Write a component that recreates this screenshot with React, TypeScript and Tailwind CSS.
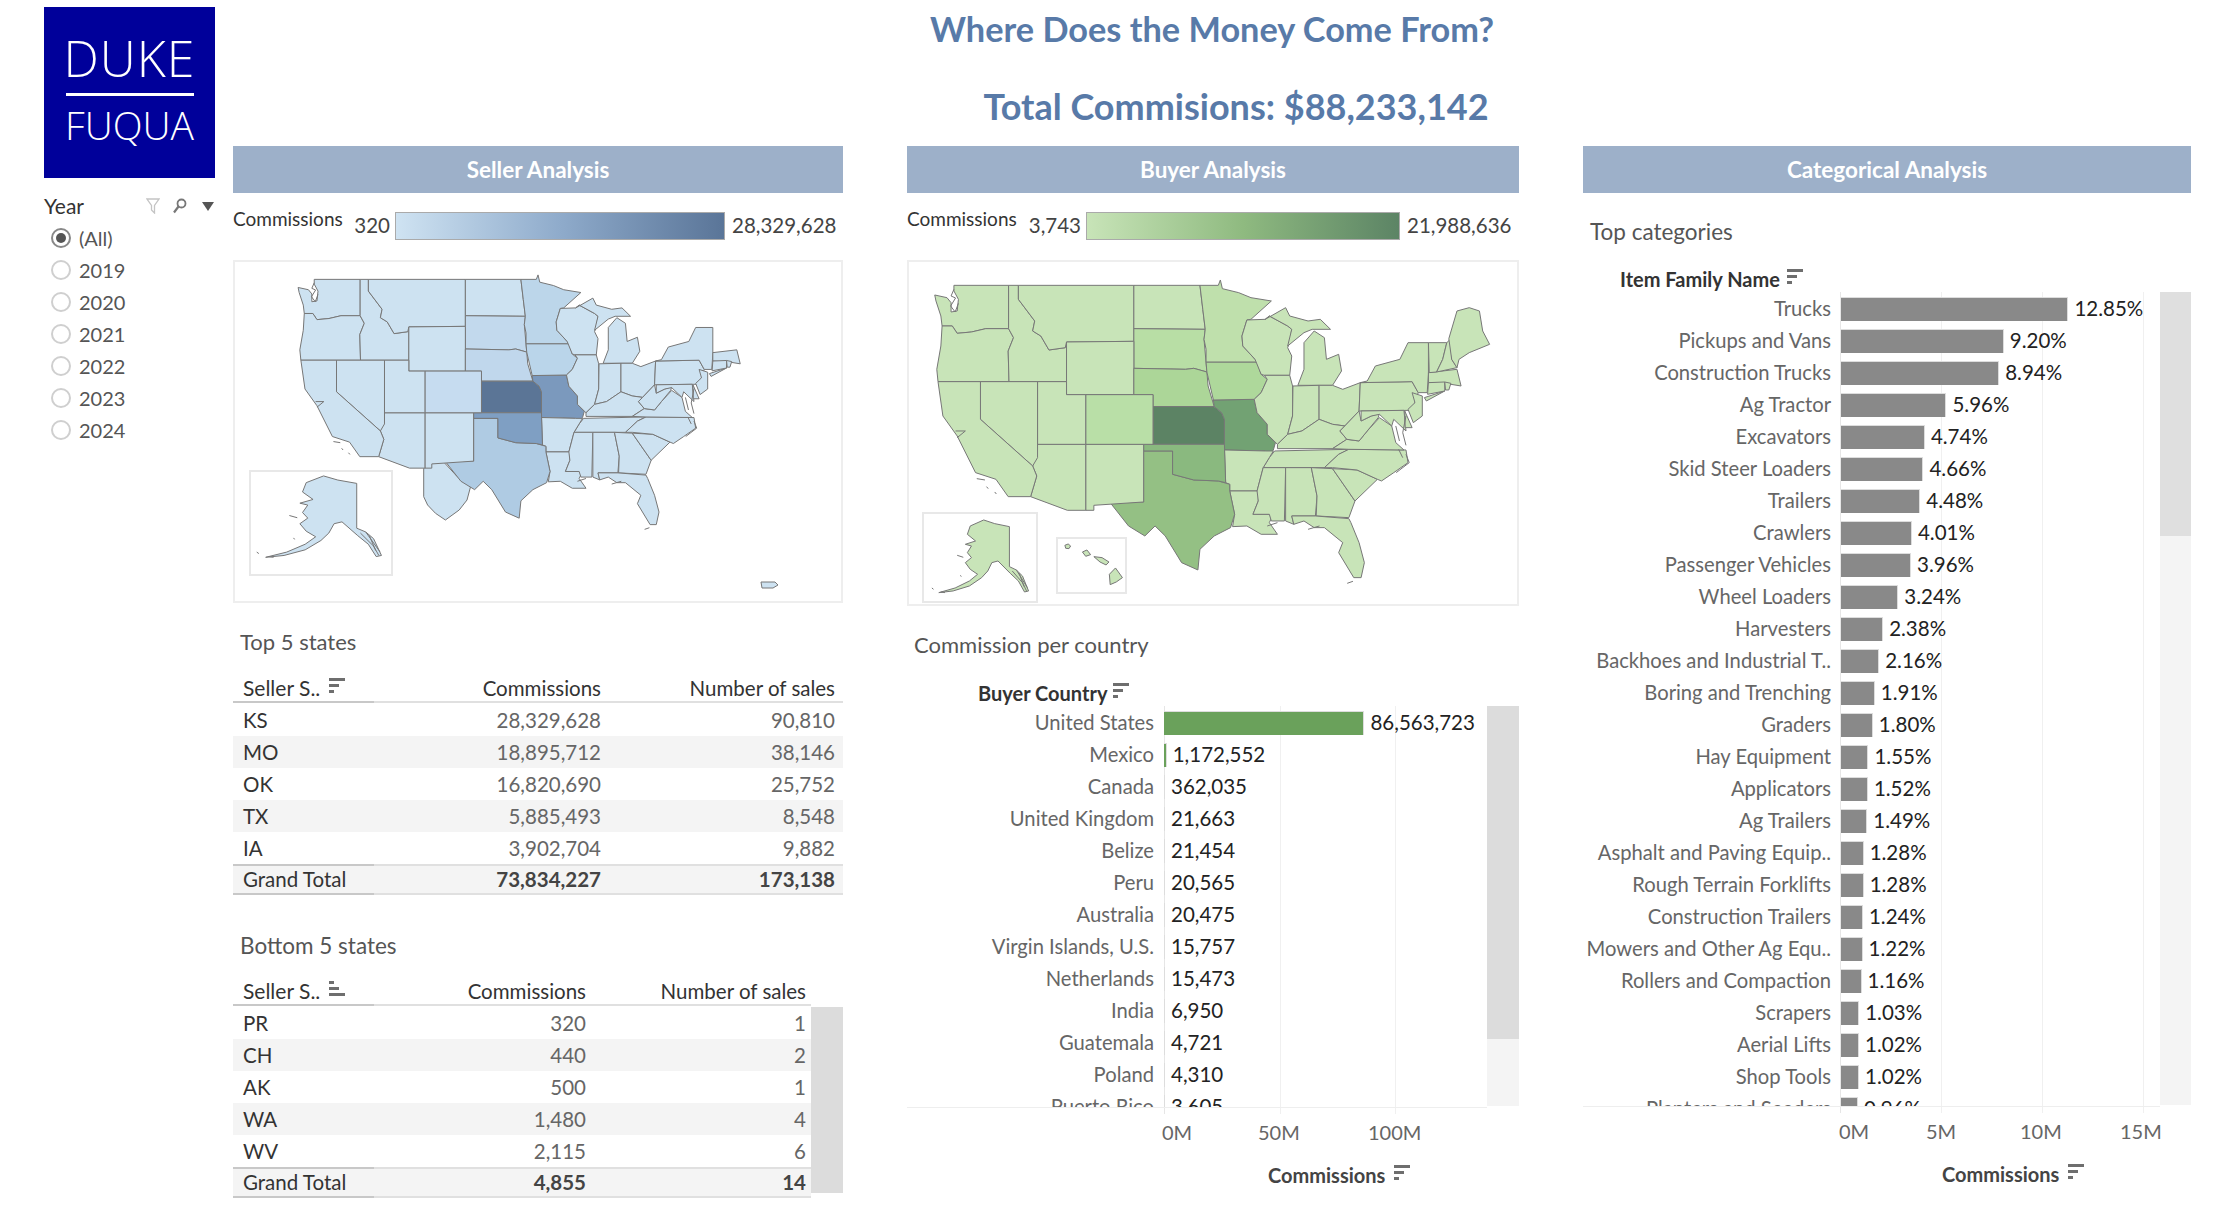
import React from "react";

// polygons are in one shared map space, each dashboard map scales them into its panel
const states: Record<string, string> = {
  WA: "85,497 115,505 125,520 125,548 140,545 143,510 132,485 132,468 266,468 266,598 210,598 175,608 140,612 128,590 103,590 100,560 88,515",
  OR: "103,590 128,590 140,612 175,608 210,598 266,598 278,625 265,665 267,757 93,757 90,720 100,650",
  ID: "266,468 290,468 290,510 330,575 325,605 345,620 365,662 405,655 408,638 408,757 267,757 265,665 278,625 266,598",
  MT: "290,468 573,468 573,636 408,638 405,655 365,662 345,620 325,605 330,575 290,510",
  ND: "573,468 735,468 742,540 748,600 573,598",
  SD: "573,598 748,600 745,630 750,700 752,728 720,717 700,720 573,717",
  WY: "408,638 573,636 573,796 408,796",
  NE: "573,717 700,720 720,717 752,728 755,770 770,832 620,832 620,796 573,796",
  KS: "620,832 770,832 788,850 795,870 795,945 620,945",
  MO: "768,812 868,810 875,850 900,885 900,915 920,940 915,962 902,980 895,965 795,962 795,870 788,850 770,832",
  IA: "750,698 875,698 885,735 900,750 885,790 868,810 768,812 752,728",
  MN: "735,468 780,468 785,452 790,478 830,490 860,505 910,515 860,570 850,572 838,620 840,650 870,690 875,698 750,698 750,660 745,630 748,600 742,540",
  WI: "850,572 895,570 905,560 950,590 960,600 955,640 950,655 960,680 955,738 893,738 885,735 870,690 840,650 838,620",
  IL: "893,738 955,738 962,770 962,860 950,915 925,945 900,915 900,885 875,850 868,810 885,790 900,750",
  MIU: "895,570 945,535 955,560 1000,575 1030,570 1055,600 1010,600 990,610 950,650 960,600 950,590 905,560",
  MIL: "990,640 1015,605 1040,625 1045,690 1075,675 1082,725 1060,768 975,768 990,720",
  IN: "963,770 1027,768 1027,870 985,905 950,915 962,860",
  OH: "1027,768 1060,768 1085,780 1128,760 1125,845 1090,890 1060,885 1027,870",
  KY: "950,915 985,905 1027,870 1060,885 1090,890 1078,905 1095,930 1060,958 925,958 925,945",
  TN: "918,965 1100,960 1075,975 1040,1015 890,1015 905,985",
  AR: "795,962 895,965 915,965 905,985 890,1015 875,1085 808,1085 808,1065 798,1060",
  LA: "808,1085 878,1085 878,1115 865,1155 915,1155 905,1180 925,1215 885,1215 850,1190 815,1192 820,1155",
  MS: "890,1015 945,1015 942,1175 910,1175 905,1155 865,1155 878,1115 875,1085",
  AL: "945,1015 1008,1015 1022,1100 1018,1160 960,1160 965,1185 945,1175",
  GA: "1008,1015 1060,1018 1115,1115 1100,1165 1020,1160 1022,1100",
  FL: "960,1160 1018,1160 1100,1168 1105,1180 1125,1240 1138,1300 1130,1345 1112,1345 1075,1270 1085,1240 1040,1195 1015,1195 990,1175 965,1185",
  SC: "1060,1018 1120,1022 1170,1050 1115,1115",
  NC: "1040,1015 1075,975 1100,960 1240,962 1245,1000 1210,1030 1180,1055 1170,1050 1120,1022 1060,1015",
  VA: "1060,958 1095,930 1125,935 1145,905 1175,865 1205,890 1215,940 1235,962 1100,960",
  WV: "1090,890 1125,845 1130,875 1155,860 1175,852 1172,865 1145,905 1125,935 1095,930 1078,905",
  PA: "1128,760 1255,757 1270,790 1255,843 1125,845",
  MD: "1130,845 1235,843 1240,905 1210,870 1205,890 1175,855 1155,860 1130,875",
  DE: "1237,845 1255,895 1238,895",
  NJ: "1255,790 1280,800 1280,860 1258,880 1245,840 1262,820",
  NY: "1145,755 1165,710 1225,690 1245,640 1295,640 1295,735 1292,790 1270,790 1255,757 1128,760",
  LI: "1285,805 1335,785 1290,815",
  MA: "1295,730 1365,720 1375,770 1350,765 1295,760",
  CT: "1295,760 1335,758 1335,785 1293,795",
  RI: "1335,758 1350,762 1345,782 1337,782",
  TX: "597,965 668,965 668,1035 720,1052 780,1055 808,1065 808,1085 820,1155 810,1195 770,1220 735,1260 730,1322 690,1300 650,1220 625,1190 600,1220 560,1190 515,1120 597,1118",
  OK: "597,945 795,945 798,1060 780,1055 720,1052 668,1035 668,965 597,965",
  NM: "455,945 597,945 597,1118 475,1128 475,1143 455,1143",
  AZ: "337,945 455,945 455,1143 410,1143 320,1102 335,1040 325,1010",
  CO: "455,796 620,796 620,945 455,945",
  UT: "337,757 408,757 408,796 455,796 455,945 337,945",
  NV: "197,757 337,757 337,985 325,1010 197,870",
  CA: "93,757 197,757 197,870 325,1010 335,1040 320,1102 265,1102 235,1050 185,1030 140,920 105,860",
};

const newEngland: Record<string, string> = {
  VT: "1295,640 1340,640 1330,690 1315,728 1297,730",
  NH: "1340,640 1350,628 1352,690 1365,715 1315,728 1330,690",
  ME: "1352,690 1345,628 1365,545 1395,535 1420,545 1428,605 1445,645 1395,670 1370,690 1365,715",
};

// coastline squiggles and small islands
const coastDetail =
  "M132,480 L125,500 L136,506 L124,530 L135,548 L143,522 M1215,890 L1224,935 M1240,860 L1232,910 L1240,948 M1240,975 L1248,1000 L1216,1030 M1222,960 L1232,985 M188,1048 L208,1052 M212,1072 L216,1078 M232,1088 L236,1094 M1096,1362 L1110,1356 M1000,1200 L1028,1190 M900,1190 L925,1180 M136,905 L160,905 L140,925";

const alaska =
  "205,1172 232,1183 268,1192 268,1312 285,1322 300,1340 315,1385 305,1388 290,1355 270,1332 240,1295 225,1300 215,1325 200,1345 170,1370 130,1385 95,1390 135,1376 170,1355 190,1335 172,1320 160,1300 175,1285 165,1270 175,1250 160,1245 185,1235 165,1215 172,1190";
const alaskaDetail = "M275,1325 L300,1360 L310,1385 M285,1322 L312,1375 M292,1332 L304,1372 M140,1278 L155,1284 M148,1338 L150,1342 M78,1376 L82,1380 M100,1388 L110,1390";

const hawaii = [
  "528,1316 545,1345 530,1358 515,1366 513,1335",
  "475,1282 495,1285 512,1298 505,1307 490,1298",
  "447,1268 458,1262 467,1276 455,1281",
  "404,1248 412,1244 418,1250 414,1258 406,1257",
];

// CH sits just below the border on the seller map, in panel pixels
const chihuahua = "188.7,206.3 196.6,201.3 208.4,199.7 222.3,214.7 236,223 232,238 224.2,248 210.4,258 200.5,251.3 192.6,243 188.7,234.7";

const sellerFills: Record<string, string> = {
  MN: "#bcd6ea", SD: "#c2d9ed", NE: "#c0d7ec", IA: "#bad5ea", KS: "#5b7596", MO: "#7b99bd",
  OK: "#7f9fc3", TX: "#afcbe3", CO: "#c6dcf0",
};
const buyerFills: Record<string, string> = {
  MN: "#bfe0ac", SD: "#b8dea5", NE: "#acd698", IA: "#aed89b", KS: "#5c8364", MO: "#72a273",
  OK: "#8ab97f", TX: "#94c084", CO: "#b9dfa7",
};

function UsMap({ variant }: { variant: "seller" | "buyer" }) {
  const seller = variant === "seller";
  const fills = seller ? sellerFills : buyerFills;
  const base = seller ? "#cde2f1" : "#c8e4b8";
  const all = seller ? states : { ...states, ...newEngland };
  // shared space -> panel pixels
  const toPanel = "translate(-2,-2) scale(0.408,0.3333) translate(-17,-392)";
  const shared = { stroke: "#777", strokeWidth: 1, vectorEffect: "non-scaling-stroke" as const, strokeLinejoin: "round" as const };
  return (
    <svg className="block w-full h-full" viewBox={seller ? "0 0 606 339" : "0 0 608 342"}>
      {seller && <polygon points={chihuahua} fill={base} {...shared} />}
      <g transform={seller ? "translate(41.5,-2.2) scale(0.84,0.839)" : ""}>
        <g transform={toPanel}>
          {Object.entries(all).map(([k, pts]) => (
            <polygon key={k} points={pts} fill={fills[k] ?? base} {...shared} />
          ))}
          <path d={coastDetail} fill="none" {...shared} />
        </g>
      </g>
      {seller ? (
        <>
          <rect x="15" y="209" width="142" height="104" fill="#fff" stroke="#e8e8e8" strokeWidth="2" />
          <g transform="translate(-7.8,-75) scale(1.29,1.12)">
            <g transform={toPanel}>
              <polygon points={alaska} fill={base} {...shared} />
              <path d={alaskaDetail} fill="none" {...shared} />
            </g>
          </g>
          <polygon points="526,320 540,320 543,323 538,326 527,326" fill={base} {...shared} />
        </>
      ) : (
        <>
          <rect x="14" y="251" width="114" height="89" fill="#fff" stroke="#e8e8e8" strokeWidth="2" />
          <g transform={toPanel}>
            <polygon points={alaska} fill={base} {...shared} />
            <path d={alaskaDetail} fill="none" {...shared} />
          </g>
          <rect x="148" y="276" width="69" height="55" fill="#fff" stroke="#e8e8e8" strokeWidth="2" />
          <g transform={toPanel}>
            {hawaii.map((pts) => (
              <polygon key={pts} points={pts} fill={base} {...shared} />
            ))}
          </g>
        </>
      )}
    </svg>
  );
}

function SortIcon({ asc = false }: { asc?: boolean }) {
  const bars = asc ? [[0, 5], [6, 10], [12, 16]] : [[0, 16], [6, 10], [12, 5]];
  return (
    <svg width="16" height="16" viewBox="0 0 16 16" className="shrink-0 mb-[4px]">
      {bars.map(([y, w]) => (
        <rect key={y} x="0" y={y} width={w} height="3" fill="#6e6e6e" />
      ))}
    </svg>
  );
}

function SectionHeader({ title }: { title: string }) {
  return (
    <div className="h-[47px] bg-[#9db0c9] flex items-center justify-center text-white text-[22.5px] font-bold">
      {title}
    </div>
  );
}

function Legend({ min, max, barClass, minW, barW }: { min: string; max: string; barClass: string; minW: string; barW: string }) {
  return (
    <div className="flex items-center h-[28px] mt-[19px] text-[#444] text-[20.5px]">
      <span className="text-[19px] text-[#333] mb-[13px] w-[112px] shrink-0 whitespace-nowrap">Commissions</span>
      <span className={`${minW} text-right pr-[5px] mb-[2px] shrink-0`}>{min}</span>
      <div className={`${barW} ${barClass} h-[28px] border border-[#aaa] shrink-0`} />
      <span className="pl-[7px] mb-[2px]">{max}</span>
    </div>
  );
}

type TableRow = [string, string, string];

function StatesTable({ rows, total, asc, col2, col3, edge }: { rows: TableRow[]; total: TableRow; asc?: boolean; col2: string; col3: string; edge: string }) {
  return (
    <div className="flex-1 min-w-0 text-[20.5px]">
      <div className="flex h-[29px] text-[#333] leading-[24px]">
        <div className="w-[141px] pl-[10px] flex items-center gap-[9px] border-b-2 border-[#c8c8c8] whitespace-nowrap">
          <span className="text-[21px]">Seller S..</span>
          <SortIcon asc={asc} />
        </div>
        <div className={`${col2} flex items-end justify-end pb-[1px] border-b-2 border-[#e0e0e0]`}>Commissions</div>
        <div className={`${col3} ${edge} flex items-end justify-end pb-[1px] border-b-2 border-[#e0e0e0]`}>Number of sales</div>
      </div>
      <div className="mt-[1px]">
        {rows.map((r, i) => (
          <div key={r[0]} className={`flex h-[32px] items-center ${i % 2 === 1 ? "bg-[#f4f4f4]" : ""}`}>
            <div className="w-[141px] pl-[10px] text-[#333]">{r[0]}</div>
            <div className={`${col2} text-right text-[#666]`}>{r[1]}</div>
            <div className={`${col3} ${edge} text-right text-[#666]`}>{r[2]}</div>
          </div>
        ))}
        <div className="flex h-[31px] bg-[#f4f4f4] items-center">
          <div className="w-[141px] h-full flex items-center pl-[10px] text-[#333] border-y-2 border-[#c8c8c8]">{total[0]}</div>
          <div className={`${col2} h-full flex items-center justify-end font-bold text-[#444] border-y-2 border-[#e0e0e0]`}>{total[1]}</div>
          <div className={`${col3} ${edge} h-full flex items-center justify-end font-bold text-[#444] border-y-2 border-[#e0e0e0]`}>{total[2]}</div>
        </div>
      </div>
    </div>
  );
}

const countries: [string, number, string][] = [
  ["United States", 86563723, "86,563,723"],
  ["Mexico", 1172552, "1,172,552"],
  ["Canada", 362035, "362,035"],
  ["United Kingdom", 21663, "21,663"],
  ["Belize", 21454, "21,454"],
  ["Peru", 20565, "20,565"],
  ["Australia", 20475, "20,475"],
  ["Virgin Islands, U.S.", 15757, "15,757"],
  ["Netherlands", 15473, "15,473"],
  ["India", 6950, "6,950"],
  ["Guatemala", 4721, "4,721"],
  ["Poland", 4310, "4,310"],
  ["Puerto Rico", 3605, "3,605"],
];

const categories: [string, number][] = [
  ["Trucks", 12.85],
  ["Pickups and Vans", 9.2],
  ["Construction Trucks", 8.94],
  ["Ag Tractor", 5.96],
  ["Excavators", 4.74],
  ["Skid Steer Loaders", 4.66],
  ["Trailers", 4.48],
  ["Crawlers", 4.01],
  ["Passenger Vehicles", 3.96],
  ["Wheel Loaders", 3.24],
  ["Harvesters", 2.38],
  ["Backhoes and Industrial T..", 2.16],
  ["Boring and Trenching", 1.91],
  ["Graders", 1.8],
  ["Hay Equipment", 1.55],
  ["Applicators", 1.52],
  ["Ag Trailers", 1.49],
  ["Asphalt and Paving Equip..", 1.28],
  ["Rough Terrain Forklifts", 1.28],
  ["Construction Trailers", 1.24],
  ["Mowers and Other Ag Equ..", 1.22],
  ["Rollers and Compaction", 1.16],
  ["Scrapers", 1.03],
  ["Aerial Lifts", 1.02],
  ["Shop Tools", 1.02],
  ["Planters and Seeders", 0.96],
];

function BarRow({ label, width, value, barClass, labelW }: { label: string; width: number; value: string; barClass: string; labelW: string }) {
  return (
    <div className="flex items-center h-[32px]">
      <div className={`${labelW} shrink-0 text-right text-[#666] text-[20.2px] whitespace-nowrap pb-[1px]`}>{label}</div>
      <div className={`ml-[10px] h-[24px] shrink-0 border-t border-r border-[#dddddd] ${barClass}`} style={{ width }} />
      <div className="ml-[6px] text-[#222] whitespace-nowrap pb-[1px]">{value}</div>
    </div>
  );
}

function Year({ label, checked = false }: { label: string; checked?: boolean }) {
  return (
    <div className="flex items-center h-[32px] text-[20px] text-[#555]">
      <span className={`w-[20px] h-[20px] ml-[7px] rounded-full border-2 flex items-center justify-center ${checked ? "border-[#888]" : "border-[#cfcfcf]"}`}>
        {checked && <span className="w-[10px] h-[10px] rounded-full bg-[#555]" />}
      </span>
      <span className="ml-[8px]">{label}</span>
    </div>
  );
}

export default function App() {
  return (
    <div className="flex w-[2238px] h-[1218px] overflow-hidden bg-white [font-family:Lato,sans-serif]">
      {/* left rail */}
      <div className="w-[233px] shrink-0 pl-[44px] pt-[7px]">
        <div className="w-[171px] h-[171px] bg-[#00009a] text-white flex flex-col items-center pt-[22px] [font-family:'Open_Sans',sans-serif] font-light">
          <div className="text-[50px] leading-[58px] tracking-[1px]">DUKE</div>
          <div className="w-[128px] h-[3px] bg-white mt-[6px]" />
          <div className="text-[39px] leading-[46px] mt-[6px]">FUQUA</div>
        </div>
        <div className="flex items-center h-[30px] mt-[13px] pr-[19px] text-[21px] text-[#333]">
          <span className="flex-1">Year</span>
          <svg width="14" height="16" viewBox="0 0 14 16" className="mr-[12px]">
            <path d="M1 1h12L8.5 7.5V15L5.5 12V7.5z" fill="none" stroke="#c4c4c4" strokeWidth="1.3" />
          </svg>
          <svg width="15" height="16" viewBox="0 0 15 16" className="mr-[15px]">
            <circle cx="9.5" cy="5.5" r="4" fill="none" stroke="#777" strokeWidth="1.8" />
            <path d="M6.5 8.5L2 14.5" stroke="#777" strokeWidth="2.2" />
          </svg>
          <svg width="12" height="9" viewBox="0 0 12 9">
            <path d="M0 0h12L6 9z" fill="#555" />
          </svg>
        </div>
        <div className="mt-[1px]">
          <Year label="(All)" checked />
          {["2019", "2020", "2021", "2022", "2023", "2024"].map((y) => (
            <Year key={y} label={y} />
          ))}
        </div>
      </div>

      {/* dashboard */}
      <div className="w-[1958px] shrink-0">
        <div className="h-[146px] flex flex-col items-center text-[#587aa8] font-bold">
          <div className="h-[58px] leading-[58px] text-[34.3px]">Where Does the Money Come From?</div>
          <div className="mt-[19px] h-[58px] leading-[58px] pl-[48px] text-[36px]">Total Commisions: $88,233,142</div>
        </div>

        <div className="flex gap-[64px] text-[20.5px]">
          {/* seller */}
          <div className="w-[610px] shrink-0">
            <SectionHeader title="Seller Analysis" />
            <Legend min="320" max="28,329,628" minW="w-[50px]" barW="w-[330px]" barClass="bg-gradient-to-r from-[#cfe3f2] via-[#8fabcb] to-[#5a7598]" />
            <div className="mt-[20px] h-[343px] border-2 border-[#eeeeee]">
              <UsMap variant="seller" />
            </div>
            <div className="mt-[25px] h-[28px] leading-[28px] pl-[7px] text-[#555] text-[22px]">Top 5 states</div>
            <div className="mt-[18px]">
              <StatesTable
                col2="w-[227px]"
                col3="w-[242px]"
                edge="pr-[8px]"
                rows={[
                  ["KS", "28,329,628", "90,810"],
                  ["MO", "18,895,712", "38,146"],
                  ["OK", "16,820,690", "25,752"],
                  ["TX", "5,885,493", "8,548"],
                  ["IA", "3,902,704", "9,882"],
                ]}
                total={["Grand Total", "73,834,227", "173,138"]}
              />
            </div>
            <div className="mt-[37px] h-[28px] leading-[28px] pl-[7px] text-[#555] text-[22.5px]">Bottom 5 states</div>
            <div className="mt-[17px] flex">
              <StatesTable
                asc
                col2="w-[212px]"
                col3="w-[225px]"
                edge="pr-[5px]"
                rows={[
                  ["PR", "320", "1"],
                  ["CH", "440", "2"],
                  ["AK", "500", "1"],
                  ["WA", "1,480", "4"],
                  ["WV", "2,115", "6"],
                ]}
                total={["Grand Total", "4,855", "14"]}
              />
              <div className="w-[32px] h-[186px] mt-[30px] bg-[#dcdcdc] shrink-0" />
            </div>
          </div>

          {/* buyer */}
          <div className="w-[612px] shrink-0">
            <SectionHeader title="Buyer Analysis" />
            <Legend min="3,743" max="21,988,636" minW="w-[67px]" barW="w-[314px]" barClass="bg-gradient-to-r from-[#c8e4b8] via-[#8fba80] to-[#5c8465]" />
            <div className="mt-[20px] h-[346px] border-2 border-[#eeeeee]">
              <UsMap variant="buyer" />
            </div>
            <div className="mt-[25px] h-[28px] leading-[28px] pl-[7px] text-[#555] text-[22px]">Commission per country</div>
            <div className="mt-[20px] h-[28px] pl-[71px] flex items-center gap-[6px] font-bold text-[#333] text-[20px]">
              <span>Buyer Country</span>
              <SortIcon />
            </div>
            <div className="flex -mt-[1px]">
              <div className="relative w-[580px] shrink-0">
                <div className="absolute left-[257px] top-0 w-px h-[408px] bg-[#e6e6e6]" />
                <div className="absolute left-[373px] top-0 w-px h-[408px] bg-[#f0f0f0]" />
                <div className="absolute left-[488px] top-0 w-px h-[408px] bg-[#f0f0f0]" />
                <div className="relative h-[402px] overflow-hidden pt-[1px] border-b border-[#eeeeee]">
                  {countries.map(([name, v, txt]) => (
                    <BarRow key={name} label={name} value={txt} labelW="w-[247px]" barClass="bg-[#6aa15b]" width={Math.max(1, (v / 1e6) * 2.316)} />
                  ))}
                </div>
                <div className="mt-[11px] h-[25px] pl-[255px] flex items-center text-[#666] text-[20px]">
                  <span className="w-[96px] shrink-0">0M</span>
                  <span className="w-[110px] shrink-0">50M</span>
                  <span>100M</span>
                </div>
                <div className="mt-[18px] h-[25px] pl-[361px] flex items-center gap-[9px] font-bold text-[#444] text-[20px]">
                  <span>Commissions</span>
                  <SortIcon />
                </div>
              </div>
              <div className="w-[32px] h-[400px] bg-[#f4f4f4] shrink-0">
                <div className="h-[333px] bg-[#dcdcdc]" />
              </div>
            </div>
          </div>

          {/* categories */}
          <div className="w-[608px] shrink-0">
            <SectionHeader title="Categorical Analysis" />
            <div className="mt-[25px] h-[28px] leading-[28px] pl-[7px] text-[#555] text-[22.5px]">Top categories</div>
            <div className="mt-[19px] h-[28px] pl-[37px] flex items-center gap-[7px] font-bold text-[#333] text-[20px]">
              <span>Item Family Name</span>
              <SortIcon />
            </div>
            <div className="flex -mt-[1px]">
              <div className="relative w-[577px] shrink-0">
                <div className="absolute left-[257px] top-0 w-px h-[821px] bg-[#e6e6e6]" />
                <div className="absolute left-[358px] top-0 w-px h-[821px] bg-[#f0f0f0]" />
                <div className="absolute left-[459px] top-0 w-px h-[821px] bg-[#f0f0f0]" />
                <div className="absolute left-[560px] top-0 w-px h-[821px] bg-[#f0f0f0]" />
                <div className="relative h-[815px] overflow-hidden pt-[1px] border-b border-[#eeeeee]">
                  {categories.map(([name, pct]) => (
                    <BarRow key={name} label={name} value={`${pct.toFixed(2)}%`} labelW="w-[248px]" barClass="bg-[#898989]" width={pct * 17.7} />
                  ))}
                </div>
                <div className="mt-[11px] h-[25px] pl-[256px] flex items-center text-[#666] text-[20px]">
                  <span className="w-[87px] shrink-0">0M</span>
                  <span className="w-[94px] shrink-0">5M</span>
                  <span className="w-[100px] shrink-0">10M</span>
                  <span>15M</span>
                </div>
                <div className="mt-[18px] h-[25px] pl-[359px] flex items-center gap-[9px] font-bold text-[#444] text-[20px]">
                  <span>Commissions</span>
                  <SortIcon />
                </div>
              </div>
              <div className="w-[31px] h-[813px] bg-[#f4f4f4] shrink-0">
                <div className="h-[244px] bg-[#dfdfdf]" />
              </div>
            </div>
          </div>
        </div>
      </div>
    </div>
  );
}
